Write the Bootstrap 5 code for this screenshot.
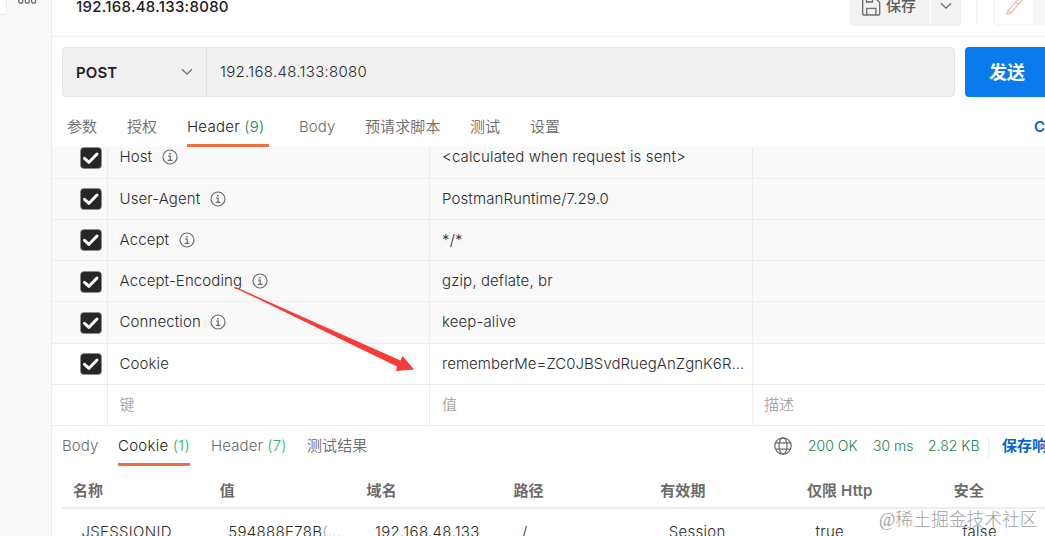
<!DOCTYPE html>
<html lang="zh-CN">
<head>
<meta charset="utf-8">
<meta name="viewport" content="width=device-width, initial-scale=1">
<title>192.168.48.133:8080</title>
<link rel="stylesheet" href="https://cdn.jsdelivr.net/npm/bootstrap@5.3.0/dist/css/bootstrap.min.css">
<style>
  body { font: 350 15px/20px Inter, "Noto Sans CJK SC", sans-serif; letter-spacing: .12px; color: #2b2b2b; background: #fff; height: 536px; overflow: hidden; }
  svg { display: block; flex: none; }
  .side { width: 52px; background: #f9f9f9; border-right: 1px solid #ededed; }
  .side-tab { width: 7px; height: 15px; background: #fff; border: 1px solid #eee; border-width: 0 1px 1px 0; }
  .titlebar { height: 37px; border-bottom: 1px solid #ededed; }
  .req-title { font-weight: 500; color: #212121; padding: 0 0 0 24px; margin-top: -3px; letter-spacing: .28px; }
  .gray-btn { background: #f2f2f2; height: 26px; color: #5c5c5c; font-weight: 500; }
  .save { width: 80px; border-radius: 0 0 0 4px; padding-left: 12px; }
  .caret { width: 30px; border-radius: 0 0 4px 0; margin-left: 1px; padding-top: 2px; }
  .vr-line { width: 1px; background: #ededed; }
  .pen { width: 42px; height: 26px; border: 2px solid #f7f7f7; border-top: 0; border-radius: 0 0 0 4px; }
  .pen-end { width: 10px; height: 26px; background: #f7f7f7; }
  .url-row { height: 50px; margin: 10px 0 0 10px; }
  .url-box { width: 893px; background: #f1f1f1; border: 1px solid #e4e4e4; border-radius: 4px; }
  .method { width: 144px; border-right: 1px solid #e0e0e0; padding: 0 13px; font-weight: 600; color: #212121; }
  .method span { padding-top: 2px; letter-spacing: .1px; }
  .url-text { padding-left: 13px; letter-spacing: .3px; }
  .send { width: 90px; background: #097bed; color: #fff; font-size: 18px; font-weight: 700; letter-spacing: 0; border-radius: 4px 0 0 4px; padding: 1px 0 0 24px; margin-left: 10px; }
  .req-tabs { height: 50px; padding-left: 15px; color: #6b6b6b; }
  .tab-item { border-bottom: 3px solid transparent; white-space: pre; }
  .tab-item.on { border-color: #ed6f3f; color: #212121; letter-spacing: .25px; }
  .req-tabs .tab-item { height: 40px; margin-top: 10px; padding-top: 10px; }
  .ok { color: #14854b; }
  .ok2 { color: #2db35f; }
  .kv { height: 279px; }
  .kv-line { display: grid; grid-template-columns: 56px 322px 323px 1fr; height: 41.25px; flex: none; background: #f9f9f9; border-bottom: 1px solid #ededed; }
  .kv-line > div { display: flex; align-items: center; border-right: 1px solid #ededed; padding-left: 12px; min-width: 0; }
  .kv-line > div:nth-child(2) { padding-left: 11.5px; }
  .kv-line > div:last-child { border-right: 0; padding-left: 11px; }
  .kv-line > .ck { padding: 1px 5px 0 0; justify-content: flex-end; }
  .kv-line.white { background: #fff; }
  .kv-line .long-value { letter-spacing: .04px; }
  .hint { color: #a6a6a6; }
  .info { margin-left: 9.5px; }
  .res-bar { height: 40px; padding-left: 10px; color: #6b6b6b; }
  .res-bar .tab-item { height: 40px; padding-top: 10px; }
  .stats { color: #14854b; padding-top: 10px; white-space: nowrap; font-size: 14px; letter-spacing: 0; }
  .save-res { color: #0265d2; font-size: 15px; font-weight: 700; }
  .ctable { margin-left: 10px; }
  .cgrid { display: grid; grid-template-columns: repeat(7, 146.8px); white-space: nowrap; }
  .chead { height: 43px; padding: 15px 0 0 11px; border-bottom: 2px solid #ededed; color: #6b6b6b; font-weight: 600; }
  .cbody { padding: 13px 0 0 19.5px; letter-spacing: .3px; }
  .arrow { left: 230px; top: 280px; }
  .mark-text { left: 879px; top: 508px; font: 300 17.8px/24px "Liberation Serif", "Noto Sans CJK SC", serif; letter-spacing: 0; color: #a2a2a2; white-space: nowrap; text-shadow: 0 0 2px #fff; }
</style>
</head>
<body class="position-relative">
<svg width="0" height="0" class="position-absolute">
  <symbol id="check" viewBox="0 0 22 22"><rect x=".5" y=".5" width="21" height="21" rx="3.5" fill="#262626" stroke="#8c8c8c" stroke-width=".6"/><path d="M4.500 11.300 9 15.300 17 7" fill="none" stroke="#fff" stroke-width="3" stroke-linecap="round" stroke-linejoin="round"/></symbol>
  <symbol id="info" viewBox="0 0 16 16"><circle cx="8" cy="8" r="7" fill="none" stroke="#6b6b6b" stroke-width="1.2"/><path d="M6.200 7.200h2v4M5.800 11.300h4.600" fill="none" stroke="#6b6b6b" stroke-width="1.2"/><rect x="7.200" y="4" width="1.500" height="1.500" fill="#6b6b6b"/></symbol>
  <symbol id="down" viewBox="0 0 12 8"><path d="m1 1.200 5 5 5-5" fill="none" stroke="#6b6b6b" stroke-width="1.3"/></symbol>
</svg>
<div class="d-flex h-100 overflow-hidden">
  <aside class="side flex-shrink-0 d-flex">
    <div class="side-tab"></div>
    <svg width="19" height="5" style="margin-left:11px" fill="none" stroke="#6b6b6b" stroke-width="1.3"><path d="M.8 0v1.200q0 2 2 2t2-2V0M7.300 0v1.200q0 2 2 2t2-2V0M13.600 0v1.200q0 2 2 2t2-2V0"/></svg>
  </aside>
  <main class="flex-grow-1 overflow-hidden">
    <header class="titlebar d-flex">
      <div class="req-title flex-grow-1">192.168.48.133:8080</div>
      <div class="d-flex align-items-start flex-shrink-0">
        <div class="gray-btn save d-flex">
          <svg width="19" height="16" fill="none" stroke="#6b6b6b" stroke-width="1.3"><path d="M.7-3v17q0 1 1 1h15q1 0 1-1V2.500L14-1M4.500-1v3h6v-3M4.700 15V8.300h9.200V15"/></svg>
          <span style="margin:-4px 0 0 5px">保存</span>
        </div>
        <div class="gray-btn caret d-flex justify-content-center"><svg width="12" height="8"><use href="#down"/></svg></div>
        <div class="vr-line" style="height:25px;margin:0 16px 0 15px"></div>
        <div class="pen"><svg width="24" height="18" style="margin-left:9px" fill="none" stroke="#f5b3a8" stroke-width="1.1"><path d="M2.500 14.500 4 10.500 14.500-1M2.500 14.500l4.500-1.500L19-1M4 10.500l3 2.500M11.500 2.500l3 2"/></svg></div>
        <div class="pen-end"></div>
      </div>
    </header>
    <section class="url-row d-flex">
      <div class="url-box d-flex flex-shrink-0">
        <div class="method d-flex align-items-center justify-content-between"><span>POST</span><svg width="12" height="8"><use href="#down"/></svg></div>
        <div class="url-text d-flex align-items-center">192.168.48.133:8080</div>
      </div>
      <div class="send d-flex align-items-center flex-shrink-0">发送</div>
    </section>
    <nav class="req-tabs d-flex">
      <div class="tab-item" style="width:60px">参数</div>
      <div class="tab-item" style="width:60px">授权</div>
      <div class="tab-item on" style="width:82px">Header <span class="ok">(9)</span></div>
      <div class="tab-item" style="width:66px;margin-left:30px">Body</div>
      <div class="tab-item" style="width:105px">预请求脚本</div>
      <div class="tab-item" style="width:60px">测试</div>
      <div class="tab-item flex-grow-1">设置</div>
      <div class="tab-item save-res fw-semibold" style="width:11px">C</div>
    </nav>
    <section class="kv d-flex flex-column justify-content-end overflow-hidden">
      <div class="kv-line"><div class="ck"><svg width="22" height="22"><use href="#check"/></svg></div><div>Host<svg class="info" width="16" height="16"><use href="#info"/></svg></div><div>&lt;calculated when request is sent&gt;</div><div></div></div>
      <div class="kv-line"><div class="ck"><svg width="22" height="22"><use href="#check"/></svg></div><div>User-Agent<svg class="info" width="16" height="16"><use href="#info"/></svg></div><div>PostmanRuntime/7.29.0</div><div></div></div>
      <div class="kv-line"><div class="ck"><svg width="22" height="22"><use href="#check"/></svg></div><div>Accept<svg class="info" width="16" height="16"><use href="#info"/></svg></div><div>*/*</div><div></div></div>
      <div class="kv-line"><div class="ck"><svg width="22" height="22"><use href="#check"/></svg></div><div>Accept-Encoding<svg class="info" width="16" height="16"><use href="#info"/></svg></div><div>gzip, deflate, br</div><div></div></div>
      <div class="kv-line"><div class="ck"><svg width="22" height="22"><use href="#check"/></svg></div><div>Connection<svg class="info" width="16" height="16"><use href="#info"/></svg></div><div>keep-alive</div><div></div></div>
      <div class="kv-line white"><div class="ck"><svg width="22" height="22"><use href="#check"/></svg></div><div>Cookie</div><div class="long-value">rememberMe=ZC0JBSvdRuegAnZgnK6R...</div><div></div></div>
      <div class="kv-line white hint"><div class="ck"></div><div>键</div><div>值</div><div>描述</div></div>
    </section>
    <nav class="res-bar d-flex">
      <div class="tab-item" style="width:56px">Body</div>
      <div class="tab-item on" style="width:72px">Cookie <span class="ok2">(1)</span></div>
      <div class="tab-item" style="width:96px;margin-left:21px">Header <span class="ok2">(7)</span></div>
      <div class="tab-item flex-grow-1">测试结果</div>
      <div class="stats d-flex flex-shrink-0">
        <svg width="18" height="18" style="margin:1px 16px 0 0" fill="none" stroke="#6b6b6b" stroke-width="1.2"><circle cx="9" cy="9" r="8.2"/><ellipse cx="9" cy="9" rx="4" ry="8.2"/><path d="M1.600 5.800h14.800M1.600 12.200h14.800"/></svg>
        <span style="width:65px">200 OK</span><span style="width:55px">30 ms</span><span style="width:60px">2.82 KB</span>
        <span class="vr-line" style="height:24px"></span>
        <span class="save-res overflow-hidden" style="width:43px;margin-left:13px">保存响</span>
      </div>
    </nav>
    <section class="ctable">
      <div class="cgrid chead"><div>名称</div><div>值</div><div>域名</div><div>路径</div><div>有效期</div><div>仅限 Http</div><div>安全</div></div>
      <div class="cgrid cbody"><div>JSESSIONID</div><div>594888E78B<span class="hint">(...</span></div><div>192.168.48.133</div><div>/</div><div>Session</div><div>true</div><div>false</div></div>
    </section>
  </main>
</div>
<svg class="arrow position-absolute" width="190" height="96"><path d="M4 7.400 4.500 6.800 8 8 170.500 80.500 172.500 76 184 89.500 166 91 167 86.500Z" fill="#f93a37"/></svg>
<div class="mark-text position-absolute">@稀土掘金技术社区</div>
<script src="https://cdn.jsdelivr.net/npm/bootstrap@5.3.0/dist/js/bootstrap.bundle.min.js"></script>
</body>
</html>
